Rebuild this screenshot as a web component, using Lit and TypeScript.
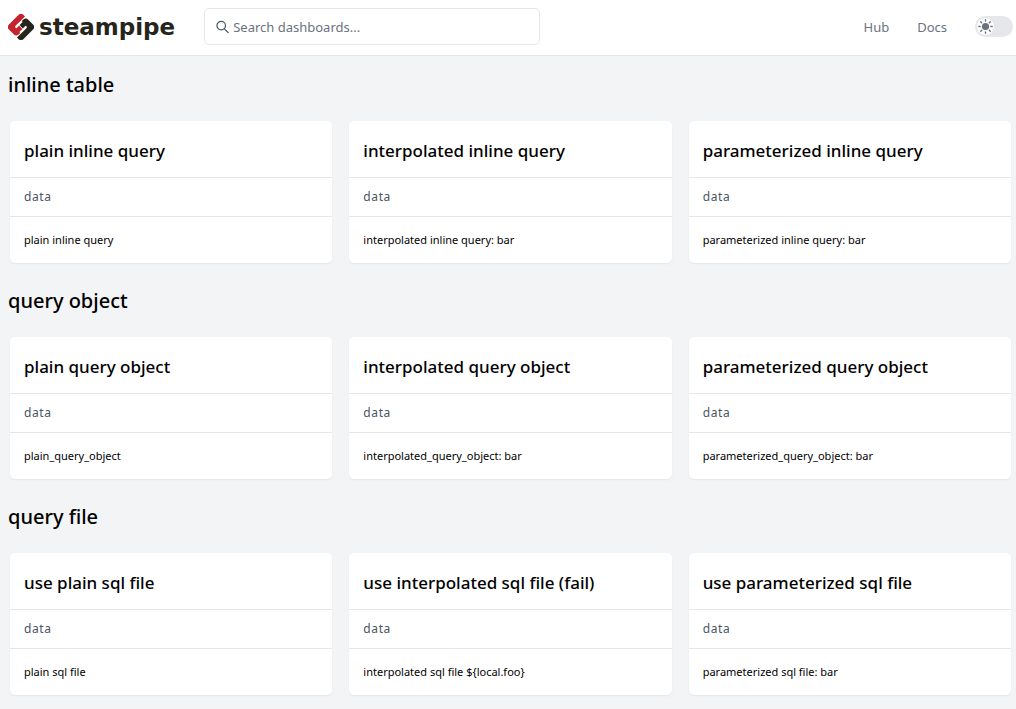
import { LitElement, html, svg, css } from "lit";
import { customElement, property, state } from "lit/decorators.js";

interface Query {
  title: string;
  value: string;
}

const sections: { heading: string; queries: Query[] }[] = [
  {
    heading: "inline table",
    queries: [
      { title: "plain inline query", value: "plain inline query" },
      { title: "interpolated inline query", value: "interpolated inline query: bar" },
      { title: "parameterized inline query", value: "parameterized inline query: bar" },
    ],
  },
  {
    heading: "query object",
    queries: [
      { title: "plain query object", value: "plain_query_object" },
      { title: "interpolated query object", value: "interpolated_query_object: bar" },
      { title: "parameterized query object", value: "parameterized_query_object: bar" },
    ],
  },
  {
    heading: "query file",
    queries: [
      { title: "use plain sql file", value: "plain sql file" },
      { title: "use interpolated sql file (fail)", value: "interpolated sql file ${local.foo}" },
      { title: "use parameterized sql file", value: "parameterized sql file: bar" },
    ],
  },
];

@customElement("query-card")
export class QueryCard extends LitElement {
  @property() heading = "";
  @property() value = "";

  static styles = css`
    :host {
      display: block;
      min-width: 0;
      background: #fff;
      border-radius: 5px;
      box-shadow: 0 1px 2px rgba(0, 0, 0, 0.06);
    }
    .title {
      margin: 0;
      padding: 18px 14px 14px;
      font-size: 17px;
      line-height: 24px;
      font-weight: 500;
    }
    .table {
      width: 100%;
      border-collapse: separate;
      border-spacing: 0;
      text-align: left;
    }
    .column,
    .cell {
      border-top: 1px solid #e5e7eb;
      line-height: 18px;
    }
    .column {
      padding: 10px 14px;
      font-size: 12px;
      font-weight: 400;
      letter-spacing: 0.05em;
      color: #4b5563;
    }
    .cell {
      padding: 14px;
      font-size: 11px;
    }
  `;

  render() {
    return html`
      <h2 class="title" id="title">${this.heading}</h2>
      <table class="table" aria-labelledby="title">
        <thead>
          <tr><th class="column" scope="col">data</th></tr>
        </thead>
        <tbody>
          <tr><td class="cell">${this.value}</td></tr>
        </tbody>
      </table>
    `;
  }
}

@customElement("theme-toggle")
export class ThemeToggle extends LitElement {
  @state() private dark = false;

  static styles = css`
    :host {
      display: block;
    }
    .toggle {
      display: block;
      position: relative;
      cursor: pointer;
    }
    .track {
      appearance: none;
      display: block;
      width: 38px;
      height: 21px;
      margin: 0;
      border-radius: 11px;
      background: #e5e7eb;
      cursor: pointer;
    }
    .thumb {
      position: absolute;
      top: 2px;
      left: 2px;
      width: 17px;
      height: 17px;
      border-radius: 50%;
      background: #fff;
      pointer-events: none;
      transition: left 0.2s;
    }
    .track:checked + .thumb {
      left: 19px;
    }
    .sun {
      display: block;
      width: 17px;
      height: 17px;
    }
  `;

  render() {
    const rays = [0, 45, 90, 135, 180, 225, 270, 315];
    return html`
      <label class="toggle">
        <input
          class="track"
          type="checkbox"
          role="switch"
          aria-label="Dark mode"
          .checked=${this.dark}
          @change=${(e: Event) => (this.dark = (e.target as HTMLInputElement).checked)}
        />
        <span class="thumb">
          <svg class="sun" viewBox="0 0 17 17" aria-hidden="true">
            <circle cx="8.5" cy="8.5" r="3.6" fill="#6b7280" />
            ${rays.map(
              (a) => svg`<path d="M8.5 1.8v1.3" transform="rotate(${a} 8.5 8.5)"
                stroke="#6b7280" stroke-width="1.4" stroke-linecap="round" />`
            )}
          </svg>
        </span>
      </label>
    `;
  }
}

@customElement("app-root")
export class AppRoot extends LitElement {
  static styles = css`
    :host {
      display: block;
      min-height: 100vh;
      background: #f3f4f6;
      color: #000;
      font-family: "Noto Sans", "Open Sans", sans-serif;
    }
    .header {
      display: flex;
      align-items: center;
      padding: 8px 3px 10px 8px;
      background: #fff;
      border-bottom: 1px solid #e5e7eb;
    }
    .brand {
      display: flex;
      align-items: center;
      gap: 5px;
      margin-right: 29px;
      color: #25251c;
      text-decoration: none;
    }
    .mark {
      display: block;
      width: 26px;
      height: 26px;
    }
    .name {
      font-family: "DejaVu Sans", sans-serif;
      font-size: 23px;
      line-height: 28px;
      font-weight: 700;
    }
    .search {
      display: flex;
      align-items: center;
      gap: 4px;
      box-sizing: border-box;
      width: 336px;
      height: 37px;
      padding: 0 11px;
      border: 1px solid #e5e7eb;
      border-radius: 5px;
    }
    .glass {
      flex: none;
      width: 13px;
      height: 14px;
    }
    .field {
      flex: 1;
      min-width: 0;
      padding: 0;
      border: 0;
      outline: 0;
      background: none;
      font: inherit;
      font-size: 13px;
    }
    .field::placeholder {
      color: #6b7280;
      opacity: 1;
    }
    .links {
      display: flex;
      align-items: center;
      gap: 28px;
      margin-left: auto;
      font-size: 13px;
      line-height: 20px;
    }
    .link {
      color: #6b7280;
      text-decoration: none;
    }
    .main {
      padding: 14px 5px 14px 8px;
    }
    .section + .section {
      margin-top: 23px;
    }
    .heading {
      margin: 0 0 21px;
      font-size: 20px;
      line-height: 30px;
      font-weight: 500;
    }
    .cards {
      display: grid;
      grid-template-columns: repeat(3, minmax(0, 1fr));
      gap: 17px;
      padding-left: 2px;
    }
  `;

  render() {
    const link =
      "M-20-31H20Q31-31 31-20V-14H-9Q-13-14-13-10V-9Q-13-7-11-7H-1V7H-14V11H-20Q-31 11-31 0V-20Q-31-31-20-31Z";
    return html`
      <header class="header">
        <a class="brand" href="#">
          <svg class="mark" viewBox="0 0 78 78" aria-hidden="true">
            <g transform="translate(39 39) rotate(-45)">
              <path fill="#c7232e" d=${link} />
              <path fill="#25251c" d=${link} transform="rotate(180)" />
            </g>
          </svg>
          <span class="name">steampipe</span>
        </a>
        <label class="search">
          <svg class="glass" viewBox="0 0 13 14" fill="none" stroke="#4b5563" stroke-width="1.2" stroke-linecap="round" aria-hidden="true">
            <circle cx="5.2" cy="5.6" r="4.3" />
            <path d="m8.4 8.8 3.7 3.7" />
          </svg>
          <input class="field" type="text" placeholder="Search dashboards..." aria-label="Search dashboards" />
        </label>
        <nav class="links">
          <a class="link" href="#hub">Hub</a>
          <a class="link" href="#docs">Docs</a>
          <theme-toggle></theme-toggle>
        </nav>
      </header>
      <main class="main">
        ${sections.map(
          (section) => html`
            <section class="section">
              <h1 class="heading">${section.heading}</h1>
              <div class="cards">
                ${section.queries.map(
                  (q) => html`<query-card .heading=${q.title} .value=${q.value}></query-card>`
                )}
              </div>
            </section>
          `
        )}
      </main>
    `;
  }
}
